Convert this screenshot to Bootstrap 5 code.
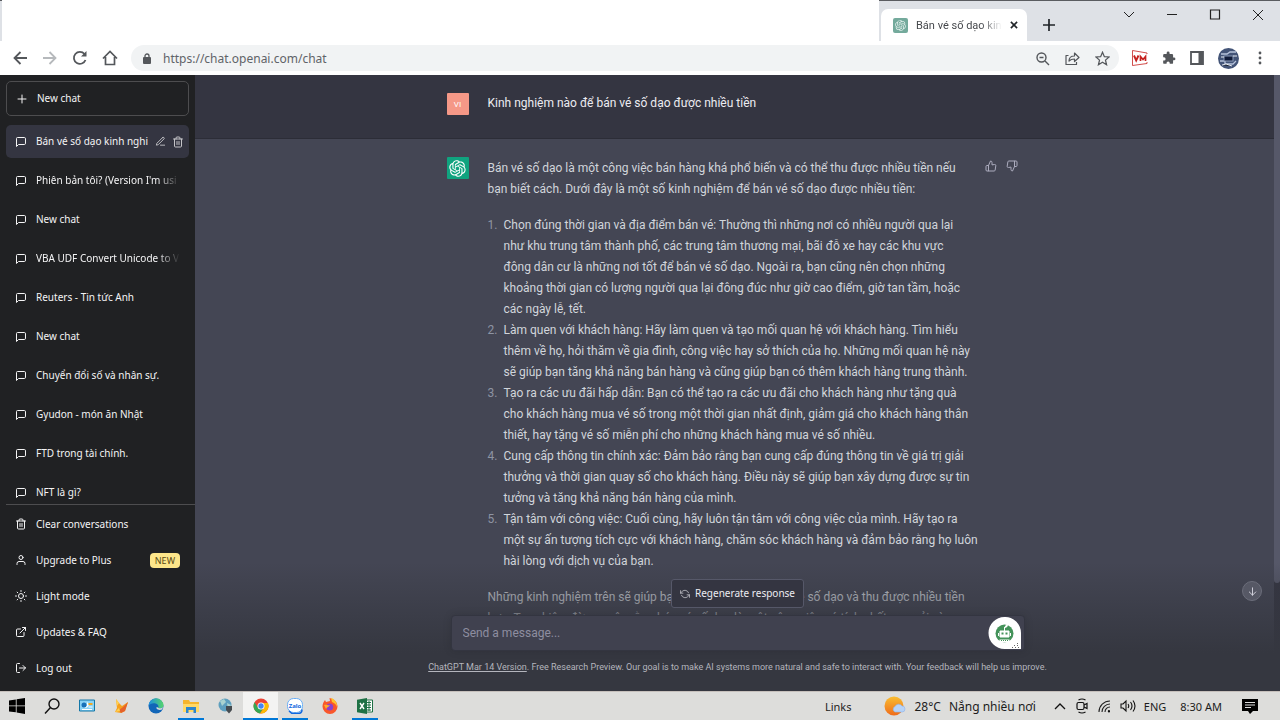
<!DOCTYPE html>
<html lang="vi">
<head>
<meta charset="utf-8">
<meta name="viewport" content="width=device-width, initial-scale=1">
<title>Bán vé số dạo kinh nghiệm</title>
<link href="https://cdn.jsdelivr.net/npm/bootstrap@5.3.0/dist/css/bootstrap.min.css" rel="stylesheet">
<style>
  body { font-family: "Noto Sans", "Open Sans", sans-serif; font-size: 12px; line-height: 21px; background: #fff; }
  svg { display: block; flex: none; }
  button { font: inherit; }
  .bare { border: 0; background: none; padding: 0; color: inherit; }
  .line { fill: none; stroke: currentColor; stroke-width: 2; stroke-linecap: round; stroke-linejoin: round; }

  /* browser window */
  .tabstrip { height: 41px; background: #dee1e6; border-top: 1px solid #5a5c60; }
  .blank-strip { margin: -1px 2px 0 2px; width: 877px; background: #fff; }
  .tab { width: 146px; height: 32px; background: #fff; border-radius: 7px 7px 0 0; font-size: 11px; font-family: Roboto, sans-serif; color: #45484c; }
  .tab-title { width: 86px; -webkit-mask-image: linear-gradient(90deg, #000 75%, transparent 100%); mask-image: linear-gradient(90deg, #000 75%, transparent 100%); }
  .window-buttons { gap: 29px; color: #222; padding: 8px 15px 0 0; }
  .toolbar { height: 34px; color: #54575b; }
  .nav-buttons { gap: 14px; padding-left: 12px; }
  .omnibox { height: 26px; border-radius: 13px; background: #f1f3f4; margin-left: 13px; padding: 0 9px 0 12px; }
  .omnibox input { border: 0; background: none; outline: 0; padding: 0; color: #5f6368; font-size: 12px; }
  .omnibox-tools { gap: 15px; }
  .extensions { gap: 14px; padding: 0 13px; }

  /* sidebar */
  .sidebar { width: 195px; background: #202123; color: #f4f4f5; font-size: 10px; line-height: 15px; }
  .sidebar-top { padding: 6px 6px 0; }
  .new-chat { height: 35px; border: 1px solid #4d4d4f; border-radius: 4px; }
  .side-item { color: inherit; text-decoration: none; border-radius: 5px; padding: 0 9px; gap: 9px; width: 100%; }
  .history { gap: 6px; padding: 9px 6px 0; }
  .history .side-item { height: 33px; flex: none; }
  .history .active { background: #343541; gap: 6px; padding-right: 5px; }
  .history .active > svg { margin-right: 3px; }
  .fade-title { white-space: nowrap; overflow: hidden; flex: 1; }
  .fade-title.long { -webkit-mask-image: linear-gradient(90deg, #000 84%, transparent); mask-image: linear-gradient(90deg, #000 84%, transparent); }
  .side-menu { border-top: 1px solid #4d4d4f; margin-left: 6px; padding: 1px 6px 5px 0; }
  .side-menu .side-item { height: 36px; }
  .new-tag { background: #fde68a; color: #5b4a12; border-radius: 4px; padding: 0 5px; font-size: 9px; }

  /* conversation */
  .chat { background: #444654; }
  .scroll-track { width: 6px; background: #343541; }
  .scroll-thumb { height: 508px; background: #565869; border-radius: 0 0 3px 3px; }
  .turn-question { background: #343541; height: 64px; border-bottom: 1px solid #2c2d37; color: #ececf1; padding-top: 18px; }
  .turn-answer { color: #d1d5db; padding-top: 18px; }
  .column { max-width: 576px; margin: 0 auto; gap: 19px; font-family: Roboto, sans-serif; }
  .face { width: 22px; height: 22px; border-radius: 1px; flex: none; font-size: 8px; }
  .face-user { background: #f59887; color: #fff; }
  .face-bot { background: #10a37f; color: #fff; }
  .reply { width: 490px; flex: none; white-space: nowrap; padding-top: 1px; }
  .reply p, .reply ol { margin: 0 0 15px; }
  .reply ol { padding-left: 16px; list-style: none; counter-reset: tip; }
  .reply li { counter-increment: tip; }
  .reply li::before { content: counter(tip) "."; float: left; margin-left: -16px; color: #8e94a3; }
  .feedback { color: #acacbe; gap: 9px; margin-left: -12px; padding-top: 3px; height: 15px; }

  .composer { left: 0; right: 0; bottom: 0; padding-top: 34px; background: linear-gradient(180deg, rgba(53,55,64,0) 12%, #353740 74%); }
  .regenerate { height: 29px; background: #343541; border: 1px solid #565869; border-radius: 3px; color: #ececf1; font-size: 10px; padding: 0 8px; gap: 5px; }
  .prompt { width: 574px; height: 36px; margin-top: 7px; background: #40414f; border: 1px solid #333540; border-radius: 4px; box-shadow: 0 0 8px rgba(0,0,0,.12); padding: 0 3px 0 11px; }
  .prompt input { background: none; border: 0; outline: 0; padding: 0; color: #ececf1; font-size: 12px; font-family: Roboto, sans-serif; }
  .prompt input::placeholder { color: #8e8ea0; }
  .notice { font-family: Roboto, sans-serif; font-size: 9px; line-height: 14px; color: #b4b5bd; padding: 9px 0 17px; white-space: nowrap; }
  .notice a { color: inherit; }
  .jump { right: 18px; bottom: 90px; width: 20px; height: 20px; border: 1px solid #6b6d7a; background: #565865; border-radius: 50%; color: #d9d9e3; }

  /* desktop bar */
  .taskbar { height: 29px; background: #dddddb; border-top: 1px solid #c6c0bc; color: #1c1c1c; }
  .apps { width: 382px; }
  .apps .running { background: linear-gradient(#0078d7, #0078d7) bottom / 26px 2px no-repeat; }
  .apps .focused { box-shadow: inset 0 -2px #0078d7; background: #f3f3f2; }
  .status { font-size: 11px; }
  .weather { font-size: 12px; }
  .weather-icon { margin-left: 33px; }
  .tray { gap: 10px; padding-left: 18px; }
  .clock { margin-left: 14px; }
  .messages { margin: 0 22px 0 20px; }
</style>
</head>
<body class="vh-100 d-flex flex-column overflow-hidden">
<svg width="0" height="0" class="position-absolute" aria-hidden="true">
  <symbol id="bubble" viewBox="0 0 24 24"><path d="M21 15a2 2 0 0 1-2 2H7l-4 4V5a2 2 0 0 1 2-2h14a2 2 0 0 1 2 2z"/></symbol>
  <symbol id="bin" viewBox="0 0 24 24"><path d="M3 6h18M19 6v14a2 2 0 0 1-2 2H7a2 2 0 0 1-2-2V6m3 0V4a2 2 0 0 1 2-2h4a2 2 0 0 1 2 2v2M10 11v6M14 11v6"/></symbol>
  <symbol id="thumb" viewBox="0 0 24 24"><path d="M14 9V5a3 3 0 0 0-3-3l-4 9v11h11.28a2 2 0 0 0 2-1.7l1.38-9a2 2 0 0 0-2-2.3zM7 22H4a2 2 0 0 1-2-2v-7a2 2 0 0 1 2-2h3"/></symbol>
  <symbol id="knot" viewBox="0 0 41 41"><path fill="currentColor" stroke="none" d="M37.5324 16.8707C37.9808 15.5241 38.1363 14.0974 37.9886 12.6859C37.8409 11.2744 37.3934 9.91076 36.676 8.68622C35.6126 6.83404 33.9882 5.3676 32.0373 4.4985C30.0864 3.62941 27.9098 3.40259 25.8215 3.85078C24.8796 2.7893 23.7219 1.94125 22.4257 1.36341C21.1295 0.785575 19.7249 0.491269 18.3058 0.500197C16.1708 0.495044 14.0893 1.16803 12.3614 2.42214C10.6335 3.67624 9.34853 5.44666 8.6917 7.47815C7.30085 7.76286 5.98686 8.3414 4.8377 9.17505C3.68854 10.0087 2.73073 11.0782 2.02839 12.312C0.956464 14.1591 0.498905 16.2988 0.721698 18.4228C0.944492 20.5467 1.83612 22.5449 3.268 24.1293C2.81966 25.4759 2.66413 26.9026 2.81182 28.3141C2.95951 29.7256 3.40701 31.0892 4.12437 32.3138C5.18791 34.1659 6.8123 35.6322 8.76321 36.5013C10.7141 37.3704 12.8907 37.5973 14.9789 37.1492C15.9208 38.2107 17.0786 39.0587 18.3747 39.6366C19.6709 40.2144 21.0755 40.5087 22.4946 40.4998C24.6307 40.5054 26.7133 39.8321 28.4418 38.5772C30.1704 37.3223 31.4556 35.5506 32.1119 33.5179C33.5027 33.2332 34.8167 32.6547 35.9659 31.821C37.115 30.9874 38.0728 29.9178 38.7752 28.684C39.8458 26.8371 40.3023 24.6979 40.0789 22.5748C39.8556 20.4517 38.9639 18.4544 37.5324 16.8707ZM22.4978 37.8849C20.7443 37.8874 19.0459 37.2733 17.6994 36.1501C17.7601 36.117 17.8666 36.0586 17.936 36.0161L25.9004 31.4156C26.1003 31.3019 26.2663 31.137 26.3813 30.9378C26.4964 30.7386 26.5563 30.5124 26.5549 30.2825V19.0542L29.9213 20.998C29.9389 21.0068 29.9541 21.0198 29.9656 21.0359C29.977 21.052 29.9842 21.0707 29.9867 21.0902V30.3889C29.9842 32.375 29.1946 34.2791 27.7909 35.6841C26.3872 37.0892 24.4838 37.8806 22.4978 37.8849ZM6.39227 31.0064C5.51397 29.4888 5.19742 27.7107 5.49804 25.9832C5.55718 26.0187 5.66048 26.0818 5.73461 26.1244L13.699 30.7248C13.8975 30.8408 14.1233 30.902 14.3532 30.902C14.583 30.902 14.8088 30.8408 15.0073 30.7248L24.731 25.1103V28.9979C24.7321 29.0177 24.7283 29.0376 24.7199 29.0556C24.7115 29.0736 24.6988 29.0893 24.6829 29.1012L16.6317 33.7497C14.9096 34.7416 12.8643 35.0097 10.9447 34.4954C9.02506 33.9811 7.38785 32.7263 6.39227 31.0064ZM4.29707 13.6194C5.17156 12.0998 6.55279 10.9364 8.19885 10.3327C8.19885 10.4013 8.19491 10.5228 8.19491 10.6071V19.808C8.19351 20.0378 8.25334 20.2638 8.36823 20.4629C8.48312 20.6619 8.64893 20.8267 8.84863 20.9404L18.5723 26.5542L15.206 28.4979C15.1894 28.5089 15.1703 28.5155 15.1505 28.5173C15.1307 28.5191 15.1107 28.516 15.0924 28.5082L7.04046 23.8557C5.32135 22.8601 4.06716 21.2235 3.55289 19.3046C3.03862 17.3858 3.30624 15.3413 4.29707 13.6194ZM31.955 20.0556L22.2312 14.4411L25.5976 12.4981C25.6142 12.4872 25.6333 12.4805 25.6531 12.4787C25.6729 12.4769 25.6928 12.4801 25.7111 12.4879L33.7631 17.1364C34.9967 17.849 36.0017 18.8982 36.6606 20.1613C37.3194 21.4244 37.6047 22.849 37.4832 24.2684C37.3617 25.6878 36.8382 27.0432 35.9743 28.1759C35.1103 29.3086 33.9415 30.1717 32.6047 30.6641C32.6047 30.5947 32.6047 30.4733 32.6047 30.3889V21.188C32.6066 20.9586 32.5474 20.7328 32.4332 20.5338C32.319 20.3348 32.154 20.1698 31.955 20.0556ZM35.3055 15.0128C35.2464 14.9765 35.1431 14.9142 35.069 14.8717L27.1045 10.2712C26.906 10.1554 26.6803 10.0943 26.4504 10.0943C26.2206 10.0943 25.9948 10.1554 25.7963 10.2712L16.0726 15.8858V11.9982C16.0715 11.9783 16.0753 11.9585 16.0837 11.9405C16.0921 11.9225 16.1048 11.9068 16.1207 11.8949L24.1719 7.25025C25.4053 6.53903 26.8158 6.19376 28.2383 6.25482C29.6608 6.31589 31.0364 6.78077 32.2044 7.59508C33.3723 8.40939 34.2842 9.53945 34.8334 10.8531C35.3826 12.1667 35.5464 13.6095 35.3055 15.0128ZM14.2424 21.9419L10.8752 19.9981C10.8576 19.9893 10.8423 19.9763 10.8309 19.9602C10.8195 19.9441 10.8122 19.9254 10.8098 19.9058V10.6071C10.8107 9.18295 11.2173 7.78848 11.9819 6.58696C12.7466 5.38544 13.8377 4.42659 15.1275 3.82264C16.4173 3.21869 17.8524 2.99464 19.2649 3.1767C20.6775 3.35876 22.0089 3.93941 23.1034 4.85067C23.0427 4.88379 22.937 4.94215 22.8668 4.98473L14.9024 9.58517C14.7025 9.69878 14.5366 9.86356 14.4215 10.0626C14.3065 10.2616 14.2466 10.4877 14.2479 10.7175L14.2424 21.9419ZM16.071 17.9991L20.4018 15.4978L24.7325 17.9975V22.9985L20.4018 25.4983L16.071 22.9985V17.9991Z"/></symbol>
</svg>

<header class="flex-shrink-0">
  <div class="tabstrip d-flex">
    <div class="blank-strip"></div>
    <div class="tab d-flex align-items-center align-self-end ps-2 pe-2">
      <svg class="ms-1" width="15" height="15" viewBox="0 0 15 15" color="#e6f2ef"><rect width="15" height="15" rx="2" fill="#74aa9c"/><use href="#knot" x="2" y="2" width="11" height="11"/></svg>
      <span class="tab-title ms-2 overflow-hidden text-nowrap">Bán vé số dạo kin</span>
      <button class="bare ms-2 text-dark" aria-label="Close tab"><svg width="8" height="8" viewBox="0 0 9 9" stroke="currentColor" stroke-width="1.800"><path d="M1 1l7 7M8 1L1 8"/></svg></button>
    </div>
    <button class="bare ms-3 pt-2 text-dark" aria-label="New tab"><svg width="12" height="12" viewBox="0 0 12 12" stroke="currentColor" stroke-width="1.700"><path d="M6 0v12M0 6h12"/></svg></button>
    <div class="window-buttons d-flex ms-auto align-self-start">
      <button class="bare" aria-label="Search tabs"><svg width="14" height="12" viewBox="0 0 14 12" fill="none" stroke="currentColor"><path d="M2 3l5 5 5-5"/></svg></button>
      <button class="bare" aria-label="Minimize"><svg width="14" height="12" viewBox="0 0 14 12" fill="none" stroke="currentColor"><path d="M2 5.500h10"/></svg></button>
      <button class="bare" aria-label="Maximize"><svg width="14" height="12" viewBox="0 0 14 12" fill="none" stroke="currentColor" stroke-width="1.200"><path d="M2.500 1h9v9h-9z"/></svg></button>
      <button class="bare" aria-label="Close"><svg width="14" height="12" viewBox="0 0 14 12" fill="none" stroke="currentColor"><path d="M2 1l10 10M12 1L2 11"/></svg></button>
    </div>
  </div>
  <div class="toolbar d-flex align-items-center">
    <nav class="nav-buttons d-flex align-items-center">
      <button class="bare" aria-label="Back"><svg width="16" height="16" viewBox="0 0 16 16" fill="none" stroke="currentColor" stroke-width="1.800"><path d="M15 8H3M8.500 2L2.500 8l6 6"/></svg></button>
      <button class="bare" aria-label="Forward" disabled><svg width="16" height="16" viewBox="0 0 16 16" fill="none" stroke="#b6b9bc" stroke-width="1.800"><path d="M1 8h12M7.500 2l6 6-6 6"/></svg></button>
      <button class="bare" aria-label="Reload"><svg width="16" height="16" viewBox="0 0 16 16" fill="none" stroke="currentColor" stroke-width="1.800"><path d="M13.500 10A6 6 0 1 1 12.500 4l1 1.500"/><path d="M14.500 1v5.500H9z" fill="currentColor" stroke="none"/></svg></button>
      <button class="bare" aria-label="Home"><svg width="16" height="16" viewBox="0 0 16 16" fill="none" stroke="currentColor" stroke-width="1.700"><path d="M1 8.500L8 1.500l7 7M3.500 7v7.500h9V7"/></svg></button>
    </nav>
    <div class="omnibox d-flex align-items-center flex-grow-1">
      <svg width="8" height="11" viewBox="0 0 8 11"><rect y="4" width="8" height="7" rx="1" fill="currentColor"/><path d="M2 4V3a2 2 0 0 1 4 0v1" fill="none" stroke="currentColor" stroke-width="1.300"/></svg>
      <input class="flex-grow-1 ms-2 ps-1" type="text" aria-label="Address" value="https://chat.openai.com/chat">
      <div class="omnibox-tools d-flex align-items-center">
        <svg width="15" height="15" viewBox="0 0 15 15" fill="none" stroke="currentColor" stroke-width="1.400"><circle cx="6.500" cy="6.500" r="4.500"/><path d="M10 10l4 4M4.500 6.500h4"/></svg>
        <svg width="15" height="15" viewBox="0 0 15 15" fill="none" stroke="currentColor" stroke-width="1.200" stroke-linejoin="round"><path d="M3.500 4.500H1v9h10.500V11M4 10c0-4 3-5 5.500-5V2l4.500 4.500L9.500 10.500V8C7 8 5.500 8.500 4 10z"/></svg>
        <svg width="15" height="15" viewBox="0 0 24 24" fill="none" stroke="currentColor" stroke-width="2"><path d="M12 2l3 7 7.500.600-5.700 5L18.500 22 12 18l-6.500 4 1.700-7.400-5.700-5L9 9z"/></svg>
      </div>
    </div>
    <div class="extensions d-flex align-items-center">
      <svg width="16" height="16" viewBox="0 0 16 16" fill="none" stroke="#c5221f"><path d="M15 4V3L.5.5v15L15 13.500V12" stroke-width=".8"/><path d="M2 5.500l2.200 5L6.500 5.500" stroke-width="1.900"/><path d="M8.500 11V6.500l2.500 3 2.500-3V11" stroke-width="1.700"/></svg>
      <svg width="14" height="14" viewBox="0 0 24 24" fill="currentColor"><path d="M20.500 11H19V7a2 2 0 0 0-2-2h-4V3.500a2.500 2.500 0 0 0-5 0V5H4a2 2 0 0 0-2 2v3.800h1.500a2.700 2.700 0 0 1 0 5.400H2V20a2 2 0 0 0 2 2h3.800v-1.500a2.700 2.700 0 0 1 5.400 0V22H17a2 2 0 0 0 2-2v-4h1.500a2.500 2.500 0 0 0 0-5z"/></svg>
      <svg width="14" height="14" viewBox="0 0 14 14"><path d="M1 1h12v12H1z" fill="none" stroke="currentColor" stroke-width="1.800"/><path d="M8.500 1H13v12H8.500z" fill="currentColor"/></svg>
      <svg width="21" height="21" viewBox="0 0 21 21"><circle cx="10.500" cy="10.500" r="10.500" fill="#435477"/><path d="M3 6h6l3-2h6M2 13h5v3h8l3-3" stroke="#b8c4dc" stroke-width="1.300" fill="none"/><rect x="6" y="8" width="9" height="5" fill="#101b38" stroke="#8c9cba"/><path d="M4 17l4-1 6 2M3 9h3M15 8h4" stroke="#e6ebf3" stroke-width="1"/></svg>
      <svg width="14" height="14" viewBox="0 0 14 14" fill="currentColor"><circle cx="7" cy="2" r="1.400"/><circle cx="7" cy="7" r="1.400"/><circle cx="7" cy="12" r="1.400"/></svg>
    </div>
  </div>
</header>

<div class="d-flex flex-grow-1 overflow-hidden">
  <aside class="sidebar d-flex flex-column flex-shrink-0">
    <div class="sidebar-top">
      <button class="bare side-item new-chat d-flex align-items-center"><svg class="line" width="12" height="12" viewBox="0 0 24 24"><path d="M12 4v16M4 12h16"/></svg>New chat</button>
    </div>
    <nav class="history d-flex flex-column flex-grow-1 overflow-hidden">
      <div class="side-item active d-flex align-items-center">
        <svg class="line" width="12" height="12"><use href="#bubble"/></svg>
        <a href="#" class="fade-title text-reset text-decoration-none">Bán vé số dạo kinh nghi</a>
        <button class="bare" aria-label="Rename"><svg class="line opacity-75" width="11" height="11" viewBox="0 0 24 24"><path d="M12 20h9M16.500 3.500a2.121 2.121 0 0 1 3 3L7 19l-4 1 1-4L16.500 3.500z"/></svg></button>
        <button class="bare" aria-label="Delete"><svg class="line opacity-75" width="12" height="12"><use href="#bin"/></svg></button>
      </div>
      <a href="#" class="side-item d-flex align-items-center"><svg class="line" width="12" height="12"><use href="#bubble"/></svg><span class="fade-title long">Phiên bản tôi? (Version I'm usi</span></a>
      <a href="#" class="side-item d-flex align-items-center"><svg class="line" width="12" height="12"><use href="#bubble"/></svg><span class="fade-title">New chat</span></a>
      <a href="#" class="side-item d-flex align-items-center"><svg class="line" width="12" height="12"><use href="#bubble"/></svg><span class="fade-title long">VBA UDF Convert Unicode to V</span></a>
      <a href="#" class="side-item d-flex align-items-center"><svg class="line" width="12" height="12"><use href="#bubble"/></svg><span class="fade-title">Reuters - Tin tức Anh</span></a>
      <a href="#" class="side-item d-flex align-items-center"><svg class="line" width="12" height="12"><use href="#bubble"/></svg><span class="fade-title">New chat</span></a>
      <a href="#" class="side-item d-flex align-items-center"><svg class="line" width="12" height="12"><use href="#bubble"/></svg><span class="fade-title">Chuyển đổi số và nhân sự.</span></a>
      <a href="#" class="side-item d-flex align-items-center"><svg class="line" width="12" height="12"><use href="#bubble"/></svg><span class="fade-title">Gyudon - món ăn Nhật</span></a>
      <a href="#" class="side-item d-flex align-items-center"><svg class="line" width="12" height="12"><use href="#bubble"/></svg><span class="fade-title">FTD trong tài chính.</span></a>
      <a href="#" class="side-item d-flex align-items-center"><svg class="line" width="12" height="12"><use href="#bubble"/></svg><span class="fade-title">NFT là gì?</span></a>
    </nav>
    <nav class="side-menu">
      <a href="#" class="side-item d-flex align-items-center"><svg class="line" width="12" height="12"><use href="#bin"/></svg>Clear conversations</a>
      <a href="#" class="side-item d-flex align-items-center"><svg class="line" width="12" height="12" viewBox="0 0 24 24"><path d="M20 21v-2a4 4 0 0 0-4-4H8a4 4 0 0 0-4 4v2"/><circle cx="12" cy="7" r="4"/></svg>Upgrade to Plus<span class="new-tag ms-auto">NEW</span></a>
      <a href="#" class="side-item d-flex align-items-center"><svg class="line" width="12" height="12" viewBox="0 0 24 24"><circle cx="12" cy="12" r="5"/><path d="M12 1v2M12 21v2M4.200 4.200l1.400 1.400M18.400 18.400l1.400 1.400M1 12h2M21 12h2M4.200 19.800l1.400-1.400M18.400 5.600l1.400-1.400"/></svg>Light mode</a>
      <a href="#" class="side-item d-flex align-items-center"><svg class="line" width="12" height="12" viewBox="0 0 24 24"><path d="M18 13v6a2 2 0 0 1-2 2H5a2 2 0 0 1-2-2V8a2 2 0 0 1 2-2h6M15 3h6v6M10 14L21 3"/></svg>Updates &amp; FAQ</a>
      <a href="#" class="side-item d-flex align-items-center"><svg class="line" width="12" height="12" viewBox="0 0 24 24"><path d="M9 21H5a2 2 0 0 1-2-2V5a2 2 0 0 1 2-2h4M16 17l5-5-5-5M21 12H9"/></svg>Log out</a>
    </nav>
  </aside>

  <main class="chat d-flex flex-grow-1 position-relative overflow-hidden">
    <div class="flex-grow-1">
      <section class="turn-question">
        <div class="column d-flex">
          <div class="face face-user d-flex align-items-center justify-content-center">VI</div>
          <div>Kinh nghiệm nào để bán vé số dạo được nhiều tiền</div>
        </div>
      </section>
      <section class="turn-answer">
        <div class="column d-flex">
          <div class="face face-bot d-flex align-items-center justify-content-center"><svg width="17" height="17"><use href="#knot"/></svg></div>
          <div class="reply">
            <p>Bán vé số dạo là một công việc bán hàng khá phổ biến và có thể thu được nhiều tiền nếu<br>bạn biết cách. Dưới đây là một số kinh nghiệm để bán vé số dạo được nhiều tiền:</p>
            <ol>
              <li>Chọn đúng thời gian và địa điểm bán vé: Thường thì những nơi có nhiều người qua lại<br>như khu trung tâm thành phố, các trung tâm thương mại, bãi đỗ xe hay các khu vực<br>đông dân cư là những nơi tốt để bán vé số dạo. Ngoài ra, bạn cũng nên chọn những<br>khoảng thời gian có lượng người qua lại đông đúc như giờ cao điểm, giờ tan tầm, hoặc<br>các ngày lễ, tết.</li>
              <li>Làm quen với khách hàng: Hãy làm quen và tạo mối quan hệ với khách hàng. Tìm hiểu<br>thêm về họ, hỏi thăm về gia đình, công việc hay sở thích của họ. Những mối quan hệ này<br>sẽ giúp bạn tăng khả năng bán hàng và cũng giúp bạn có thêm khách hàng trung thành.</li>
              <li>Tạo ra các ưu đãi hấp dẫn: Bạn có thể tạo ra các ưu đãi cho khách hàng như tặng quà<br>cho khách hàng mua vé số trong một thời gian nhất định, giảm giá cho khách hàng thân<br>thiết, hay tặng vé số miễn phí cho những khách hàng mua vé số nhiều.</li>
              <li>Cung cấp thông tin chính xác: Đảm bảo rằng bạn cung cấp đúng thông tin về giá trị giải<br>thưởng và thời gian quay số cho khách hàng. Điều này sẽ giúp bạn xây dựng được sự tin<br>tưởng và tăng khả năng bán hàng của mình.</li>
              <li>Tận tâm với công việc: Cuối cùng, hãy luôn tận tâm với công việc của mình. Hãy tạo ra<br>một sự ấn tượng tích cực với khách hàng, chăm sóc khách hàng và đảm bảo rằng họ luôn<br>hài lòng với dịch vụ của bạn.</li>
            </ol>
            <p>Những kinh nghiệm trên sẽ giúp bạn bán được thật nhiều vé số dạo và thu được nhiều tiền<br>hơn. Tuy nhiên, đừng quên rằng bán vé số dạo là một công việc có tính chất may rủi và</p>
          </div>
          <div class="feedback d-flex">
            <button class="bare" aria-label="Good answer"><svg class="line" width="12" height="12"><use href="#thumb"/></svg></button>
            <button class="bare" aria-label="Bad answer"><svg class="line" width="12" height="12" viewBox="0 0 24 24"><use href="#thumb" width="24" height="24" transform="rotate(180 12 12)"/></svg></button>
          </div>
        </div>
      </section>
    </div>
    <div class="scroll-track flex-shrink-0"><div class="scroll-thumb"></div></div>

    <div class="composer position-absolute d-flex flex-column align-items-center">
      <button class="regenerate d-flex align-items-center"><svg class="line opacity-75" width="10" height="10" viewBox="0 0 24 24"><path d="M1 4v6h6M23 20v-6h-6M20.500 9A9 9 0 0 0 5.600 5.600L1 10M23 14l-4.600 4.400A9 9 0 0 1 3.500 15"/></svg>Regenerate response</button>
      <form class="prompt d-flex align-items-center">
        <input class="flex-grow-1" type="text" placeholder="Send a message..." aria-label="Send a message">
        <button type="button" class="bare" aria-label="Assistant"><svg width="33" height="33" viewBox="0 0 33 33"><path d="M16.500 0A16 16 0 0 0 16.500 32H33V16A16 16 0 0 0 16.500 0z" fill="#fff"/><circle cx="16.500" cy="16.500" r="9" fill="#44935a"/><path d="M16.500 14v-4M12 14h9v6h-9z" fill="#fff" stroke="#fff"/><path d="M10.500 16v3M22.500 16v3" stroke="#fff"/><path d="M16.500 11c0-2 1.500-3.500 3.500-3.500 0 2-1.500 3.500-3.500 3.500z" fill="#fff"/><path d="M13.500 15.500h2v2h-2zM17.500 15.500h2v2h-2z" fill="#44935a"/><path d="M11.500 22.500h10v3h-10z" fill="#fff"/><path d="M13 23.500h7" stroke="#44935a" stroke-dasharray="1 1"/><path d="M24 30.500h7M26 28.500h5M29 26.500h2" stroke="#666" stroke-dasharray="1 2"/></svg></button>
      </form>
      <div class="notice"><a href="#">ChatGPT Mar 14 Version</a>. Free Research Preview. Our goal is to make AI systems more natural and safe to interact with. Your feedback will help us improve.</div>
      <button class="bare jump position-absolute d-flex align-items-center justify-content-center" aria-label="Scroll to bottom"><svg class="line" width="11" height="11" viewBox="0 0 24 24"><path d="M12 4v16M5 13l7 7 7-7"/></svg></button>
    </div>
  </main>
</div>

<footer class="taskbar d-flex flex-shrink-0">
  <div class="apps d-flex">
    <button class="bare col d-flex align-items-center justify-content-center" aria-label="Start"><svg width="16" height="16" viewBox="0 0 16 16"><path d="M0 2.500l6.800-1v6H0zM7.600 1.300L16 0v7.500H7.600zM0 8.300h6.800v6L0 13.400zM7.600 8.300H16V16l-8.400-1.400z"/></svg></button>
    <button class="bare col d-flex align-items-center justify-content-center" aria-label="Search"><svg width="16" height="16" viewBox="0 0 16 16" fill="none" stroke="#111" stroke-width="1.400"><circle cx="10" cy="6" r="5"/><path d="M6.500 9.500L1 15.500"/></svg></button>
    <button class="bare col d-flex align-items-center justify-content-center" aria-label="Control panel"><svg width="16" height="14" viewBox="0 0 16 14"><path d="M.500 1h15v11H.500z" fill="#8bd3f5" stroke="#1377a8"/><path d="M8 3v4H4a3 3 0 1 0 4-4z" fill="#fff"/><circle cx="5" cy="6" r="2.500" fill="#1870b8"/><path d="M9.500 4h4v2h-4z" fill="#f4a823"/><path d="M9.500 8h4M3 10.500h10" stroke="#fff"/></svg></button>
    <button class="bare col d-flex align-items-center justify-content-center" aria-label="Fox"><svg width="15" height="15" viewBox="0 0 15 15"><path d="M2 0l3 4 3 3 6-4-3 9-4 2-6-1 2-4z" fill="#f6a01c"/><path d="M14 3l-3 9-4 2-2-3 4-3z" fill="#e5622a"/><path d="M2 0l3 4-2 3zM1 13l4-4 1 3z" fill="#ffd152"/></svg></button>
    <button class="bare col d-flex align-items-center justify-content-center" aria-label="Edge"><svg width="16" height="16" viewBox="0 0 16 16"><defs><linearGradient id="eg"><stop stop-color="#1d8fe0"/><stop offset="1" stop-color="#55d56b"/></linearGradient></defs><circle cx="8" cy="8" r="7.500" fill="#1266b8"/><path d="M.500 8A7.500 7.500 0 0 1 15.500 7.500c0 2-2 3-4.500 3-1.500 0-1-1-.500-1.500C11 5 3 3.500.500 8z" fill="url(#eg)"/><path d="M15.600 8.500c-1 2-5 2.500-6.500.500C7 10 10 13 14 11.500z" fill="#dddddb"/></svg></button>
    <button class="bare running col d-flex align-items-center justify-content-center" aria-label="File Explorer"><svg width="16" height="15" viewBox="0 0 16 15"><path d="M0 1h6l1 2h9v10H0z" fill="#f5b52e"/><path d="M0 5h16v8H0z" fill="#ffd968"/><path d="M3 14V8h10v6h-2.500v-3h-5v3z" fill="#2d86cf"/></svg></button>
    <button class="bare col d-flex align-items-center justify-content-center" aria-label="Network"><svg width="16" height="16" viewBox="0 0 16 16"><circle cx="7" cy="7" r="6.500" fill="#5e9fbe"/><path d="M2 3l4-2 2 3-4 4zM9 5l4 2-3 4z" fill="#a9d2cf"/><path d="M8 8h6v4l-3 3.500L8 12z" fill="#454b50"/></svg></button>
    <button class="bare focused col d-flex align-items-center justify-content-center" aria-label="Chrome"><svg width="16" height="16" viewBox="0 0 16 16"><circle cx="8" cy="8" r="7.500" fill="#ea4335"/><path d="M1.500 4.200A7.500 7.500 0 0 0 7 15.400L10.500 9.500H5z" fill="#34a853"/><path d="M7 15.400A7.500 7.500 0 0 0 15 5H8l2.800 5z" fill="#fbbc05"/><circle cx="8" cy="8" r="3.500" fill="#fff"/><circle cx="8" cy="8" r="2.700" fill="#4285f4"/></svg></button>
    <button class="bare running col d-flex align-items-center justify-content-center" aria-label="Zalo"><svg width="16" height="16" viewBox="0 0 16 16"><rect x=".5" y=".5" width="15" height="14" rx="6" fill="#fff" stroke="#6aaef5"/><path d="M2 13l3 2.500h6c3 0 4-2 4-4" fill="none" stroke="#1268e0" stroke-width="1.500"/><text x="8" y="9.500" text-anchor="middle" font-size="6" font-weight="700" fill="#1268e0">Zalo</text></svg></button>
    <button class="bare col d-flex align-items-center justify-content-center" aria-label="Firefox"><svg width="16" height="16" viewBox="0 0 16 16"><path d="M3 2l1 2 4-1-.500-3C12 1 15.500 4 15.500 8.500a7.400 7.400 0 0 1-15 0C.500 6 1.500 4 3 2z" fill="#f9572b"/><path d="M9 0c4 1 6.500 5 6 9-1-3-3-4-5-5z" fill="#ffc22e"/><circle cx="7.700" cy="9" r="3.500" fill="#8b3fd1"/><path d="M2 7c3-1 4 1 6 0-1 2-3 2-4 4z" fill="#ffad26"/></svg></button>
    <button class="bare running col d-flex align-items-center justify-content-center" aria-label="Excel"><svg width="16" height="16" viewBox="0 0 16 16"><path d="M8 2h7.500v12H8z" fill="#fff" stroke="#1e7145"/><path d="M9 4.500h5M9 7h5M9 9.500h5M9 12h5M12 3v10" stroke="#1e7145"/><path d="M0 1.800L10 0v16L0 14.200z" fill="#1e7145"/><path d="M3 5l4 6M7 5l-4 6" stroke="#fff" stroke-width="1.400"/></svg></button>
  </div>
  <div class="status d-flex align-items-center ms-auto">
    <span>Links</span>
    <svg class="weather-icon" width="22" height="20" viewBox="0 0 22 20"><defs><linearGradient id="sg" x2="0" y2="1"><stop stop-color="#f9bd31"/><stop offset="1" stop-color="#ef6c1b"/></linearGradient></defs><circle cx="10" cy="10" r="9.500" fill="url(#sg)"/><path d="M11 16a3 3 0 0 1 0-5.500 4 4 0 0 1 7-.500 3 3 0 0 1 0 6z" fill="#b7d3f7" stroke="#8fb4ea" stroke-width=".6"/></svg>
    <span class="ms-2 weather">28°C</span><span class="ms-2 weather">Nắng nhiều nơi</span>
    <div class="tray d-flex align-items-center">
      <svg width="12" height="12" viewBox="0 0 12 12" fill="none" stroke="#111" stroke-width="1.300"><path d="M1 9l5-5 5 5"/></svg>
      <svg width="12" height="16" viewBox="0 0 12 16" fill="none" stroke="#111" stroke-width="1.200"><rect x="1" y="4.500" width="7" height="7" rx="1.500"/><path d="M8 7l3-1.500v5L8 9M2.500 2q3.500-2 7 0M2.500 14q3.500 2 7 0"/></svg>
      <svg width="12" height="13" viewBox="0 0 12 13" fill="none" stroke="#222" stroke-width="1.100"><path d="M1 12A11 11 0 0 1 12 1M4 12a8 8 0 0 1 8-8M7 12a5 5 0 0 1 5-5"/><circle cx="11" cy="11.300" r="1.200" fill="#111" stroke="none"/></svg>
      <svg width="16" height="14" viewBox="0 0 16 14" fill="none" stroke="#111" stroke-width="1.100"><path d="M1 5h2l3-3v10L3 9H1zM8 5q1.500 2 0 4M10.500 3q3 4 0 8M13 1.500q4 5.500 0 11"/></svg>
    </div>
    <span class="ms-2">ENG</span><span class="clock">8:30 AM</span>
    <svg class="messages" width="16" height="15" viewBox="0 0 16 15"><path d="M0 0h16v12h-5l-3 3-2-3H0z" fill="#000"/><path d="M3 3.500h10M3 6h10M3 8.500h6" stroke="#ddd"/></svg>
  </div>
</footer>
<script src="https://cdn.jsdelivr.net/npm/bootstrap@5.3.0/dist/js/bootstrap.bundle.min.js"></script>
</body>
</html>
